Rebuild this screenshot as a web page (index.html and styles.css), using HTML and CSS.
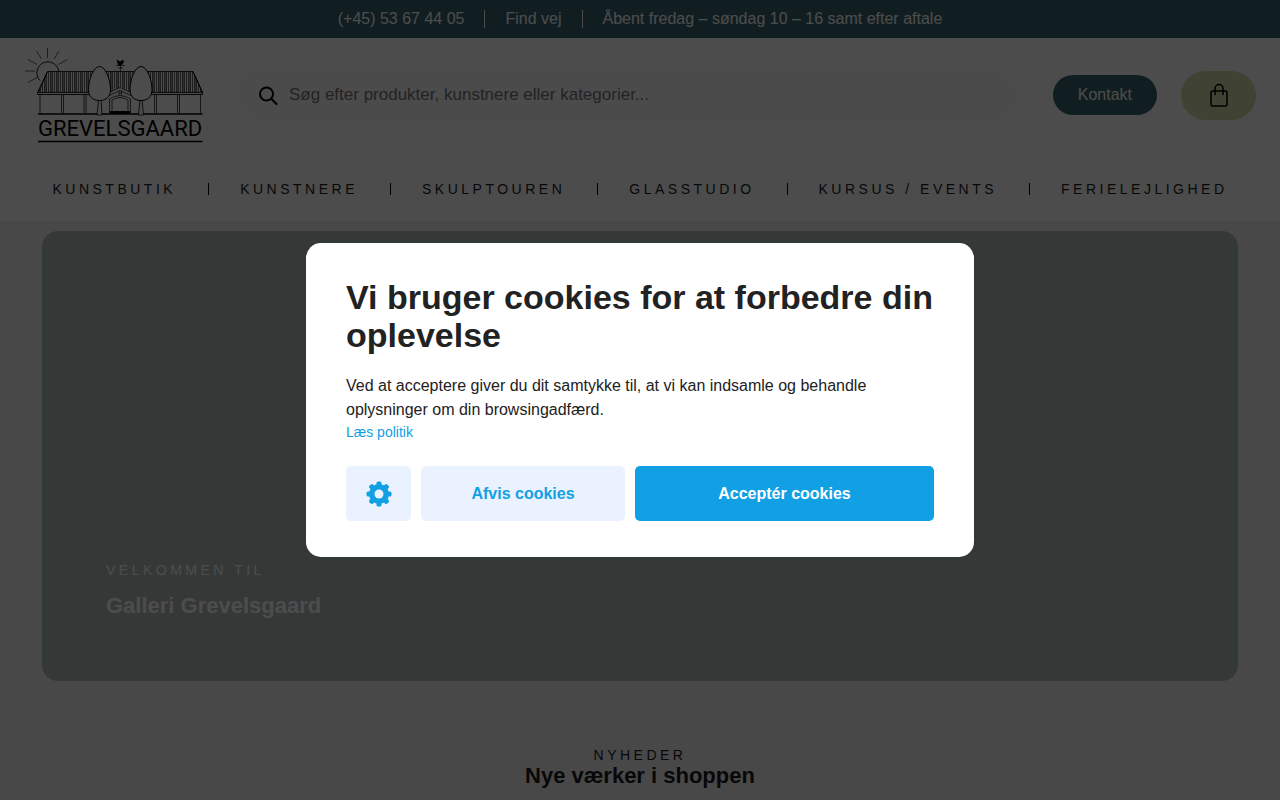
FILE: index.html
```html
<!DOCTYPE html>
<html lang="da">

<head>
  <meta charset="UTF-8">
  <meta name="viewport" content="width=device-width, initial-scale=1.0">
  <title>Galleri Grevelsgaard</title>
  <link rel="stylesheet" href="styles.css">
</head>

<body>
  <div class="topbar">
    <a href="#">(+45) 53 67 44 05</a>
    <a href="#">Find vej</a>
    <span>Åbent fredag – søndag 10 – 16 samt efter aftale</span>
  </div>

  <header class="header">
    <div class="header-row">
      <a class="logo" href="#" aria-label="Grevelsgaard">
        <svg width="180" height="98" viewBox="24 46 180 98" fill="none" stroke="#000" stroke-width="1">
          <defs>
            <pattern id="roof" width="6" height="23" patternUnits="userSpaceOnUse">
              <path d="M.5 0v23M2.5 0v23M4.5 0v23" stroke-width=".6" />
              <path d="M3.5 0v23" stroke-width=".4" />
            </pattern>
          </defs>
          <!-- Sun -->
          <path d="M40 80.500a11 11 0 1 1 18.800-9" stroke-width=".9" />
          <path d="M47.500 48v10M36.500 51l5 8M59 51l-5 8M28 59.500l9 5M67.500 59.500l-9 5M25 71h10M28 82.500l9-5" stroke-width=".6" />
          <!-- Roof and walls -->
          <path d="M47.500 71.500h145.500l9.500 21h-164z" fill="url(#roof)" stroke-width=".8" />
          <path d="M47.500 71.500L37.500 92.500v2H202.500v-2L193 71.500" stroke-width=".9" />
          <path d="M40 95v18M200.500 95v18M61.500 95v18M63.500 95v18M84 95v18M86 95v18M154.500 95v18M156.500 95v18M177.500 95v18M179.500 95v18" stroke-width=".7" />
          <path d="M38 114h164.500" stroke-width="1.500" />
          <!-- Gate -->
          <path d="M105 94l15-7 15 7v19h-30z" fill="#fff" stroke="none" />
          <path d="M106 94l14-6.500 14 6.500M106 97l14-6.500 14 6.500M109.500 113v-14q10.500-7 21 0v14M112 113v-13q8-5 16 0v13" stroke-width=".7" />
          <path d="M119 91v4M121.500 91v4M119 93h2.500" stroke-width=".7" />
          <path d="M110 111h20v3h-20z" fill="#000" stroke="none" />
          <!-- Weather vane -->
          <path d="M120.500 71v-7M116 65.500h9M118 68h5" stroke-width=".6" />
          <path d="M117 60l3 2 3-2 .5 2-2 3h-3z" fill="#000" stroke-width=".7" />
          <!-- Trees -->
          <path d="M98.500 100l-1.500 15h5l-1-15M140 100l-1.500 15h5l-1.500-15" fill="#fff" stroke-width=".8" />
          <path d="M99.500 66.500c6 0 11 13 11 23 0 8-5 11-11 11s-11-3-11-11c0-10 5-23 11-23zM141 66.500c6 0 11 13 11 23 0 8-5 11-11 11s-11-3-11-11c0-10 5-23 11-23z" fill="#fff" />
          <text class="logo-text" x="38" y="136">GREVELSGAARD</text>
          <path d="M38 141.500h164.500" stroke-width="1.500" />
        </svg>
      </a>

      <form class="search">
        <svg width="20" height="20" viewBox="0 0 20 20" fill="none" stroke="#000" stroke-width="2" stroke-linecap="round">
          <circle cx="7.500" cy="9" r="6.500" />
          <path d="M12.500 14l5 5" />
        </svg>
        <input type="text" placeholder="Søg efter produkter, kunstnere eller kategorier..." aria-label="Søg">
      </form>

      <a class="contact" href="#">Kontakt</a>
      <button class="cart" type="button" aria-label="Kurv">
        <svg width="18" height="24" viewBox="0 0 18 24" fill="none" stroke="#000" stroke-width="1.500" stroke-linecap="round">
          <rect x="1" y="8" width="16" height="15" rx="1.500" />
          <path d="M5 11.500V5.500a4 4 0 0 1 8 0V11.500" />
        </svg>
      </button>
    </div>

    <nav class="nav">
      <a href="#">KUNSTBUTIK</a>
      <a href="#">KUNSTNERE</a>
      <a href="#">SKULPTOUREN</a>
      <a href="#">GLASSTUDIO</a>
      <a href="#">KURSUS / EVENTS</a>
      <a href="#">FERIELEJLIGHED</a>
    </nav>
  </header>

  <main>
    <section class="hero">
      <p class="eyebrow">VELKOMMEN TIL</p>
      <h1>Galleri Grevelsgaard</h1>
    </section>
    <section class="news">
      <p class="eyebrow">NYHEDER</p>
      <h2>Nye værker i shoppen</h2>
    </section>
  </main>

  <!-- Cookie consent -->
  <div class="overlay">
    <div class="cookie" role="dialog" aria-labelledby="cookie-title">
      <h2 id="cookie-title">Vi bruger cookies for at forbedre din oplevelse</h2>
      <p>Ved at acceptere giver du dit samtykke til, at vi kan indsamle og behandle oplysninger om din browsingadfærd.</p>
      <a href="#">Læs politik</a>
      <div class="cookie-buttons">
        <button type="button" class="btn" aria-label="Indstillinger">
          <svg width="26" height="26" viewBox="-13 -13 26 26" fill="#12a0e4">
            <g id="teeth">
              <rect x="-2.500" y="-12.500" width="5" height="25" rx="1.500" />
              <rect x="-12.500" y="-2.500" width="25" height="5" rx="1.500" />
            </g>
            <use href="#teeth" transform="rotate(45)" />
            <circle r="10" />
            <circle r="4.500" fill="#eaf2ff" />
          </svg>
        </button>
        <button type="button" class="btn">Afvis cookies</button>
        <button type="button" class="btn btn-primary">Acceptér cookies</button>
      </div>
    </div>
  </div>
</body>

</html>
```
FILE: styles.css
```css
* {
  box-sizing: border-box;
}

body {
  margin: 0;
  height: 100vh;
  overflow: hidden;
  background: #f0f0f0;
  color: #1c1c1c;
  font-family: "Liberation Sans", Arial, sans-serif;
  font-size: 16px;
}

a {
  color: inherit;
  text-decoration: none;
}

h1,
h2,
p {
  margin: 0;
}

button {
  border: 0;
  font-family: inherit;
  cursor: pointer;
}

svg {
  display: block;
}

/* Top bar */
.topbar {
  display: flex;
  justify-content: center;
  padding: 10px 0;
  background: #396471;
  color: #fff;
  line-height: 18px;
}

.topbar > * + * {
  margin-left: 20px;
  padding-left: 20px;
  border-left: 1px solid #fff;
}

/* Header */
.header {
  padding-bottom: 22px;
  background: #fff;
}

.header-row {
  display: flex;
  align-items: center;
  gap: 24px;
  padding: 8px 24px 0;
}

.logo-text {
  font-family: Roboto, sans-serif;
  font-size: 22px;
  fill: #000;
  stroke: none;
}

.search {
  display: flex;
  flex: 1;
  align-items: center;
  gap: 10px;
  height: 54px;
  margin: 0 12px 0 8px;
  padding: 0 23px;
  border-radius: 27px;
  background: #fcfcfc;
}

.search input {
  flex: 1;
  height: 40px;
  padding: 0;
  border: 0;
  outline: 0;
  background: none;
  font-family: inherit;
  font-size: 17px;
}

.search input::placeholder {
  color: #757575;
}

.contact {
  padding: 0 25px;
  border-radius: 20px;
  background: #396471;
  color: #fff;
  line-height: 40px;
}

.cart {
  display: flex;
  align-items: center;
  justify-content: center;
  width: 75px;
  height: 49px;
  padding: 0;
  border-radius: 25px;
  background: #d5dcaa;
}

.nav {
  display: flex;
  align-items: center;
  justify-content: center;
  margin-top: 35px;
  height: 20px;
  font-size: 14px;
  letter-spacing: 0.25em;
  line-height: 12px;
}

.nav a + a {
  margin-left: 32px;
  padding-left: 31px;
  border-left: 1px solid #000;
}

/* Content */
.hero {
  display: flex;
  flex-direction: column;
  justify-content: flex-end;
  height: 450px;
  margin: 10px 42px 0;
  padding: 0 64px 60px;
  border-radius: 16px;
  background: #afbdb8;
  color: #fff;
}

.eyebrow {
  font-size: 14px;
  letter-spacing: 0.25em;
  line-height: 20px;
}

.hero h1,
.news h2 {
  font-size: 22px;
  line-height: 22px;
}

.hero h1 {
  margin: 15px 0 4px;
}

.news {
  padding-top: 64px;
  text-align: center;
}

/* Cookie consent */
.overlay {
  position: fixed;
  inset: 0;
  display: flex;
  align-items: center;
  justify-content: center;
  background: rgba(0, 0, 0, 0.7);
}

.cookie {
  width: 668px;
  max-width: 100%;
  padding: 35px 40px 36px;
  border-radius: 15px;
  background: #fff;
  color: #222;
}

.cookie h2 {
  margin-bottom: 20px;
  font-size: 34px;
  line-height: 38px;
}

.cookie p {
  line-height: 24px;
}

.cookie a {
  display: block;
  color: #12a0e4;
  font-size: 14px;
  line-height: 20px;
}

.cookie-buttons {
  display: grid;
  grid-template-columns: 65px 204fr 299fr;
  gap: 10px;
  margin-top: 24px;
}

.btn {
  display: flex;
  align-items: center;
  justify-content: center;
  height: 55px;
  border-radius: 5px;
  background: #eaf2ff;
  color: #12a0e4;
  font-size: 16px;
  font-weight: bold;
}

.btn-primary {
  background: #12a0e4;
  color: #fff;
}
```
